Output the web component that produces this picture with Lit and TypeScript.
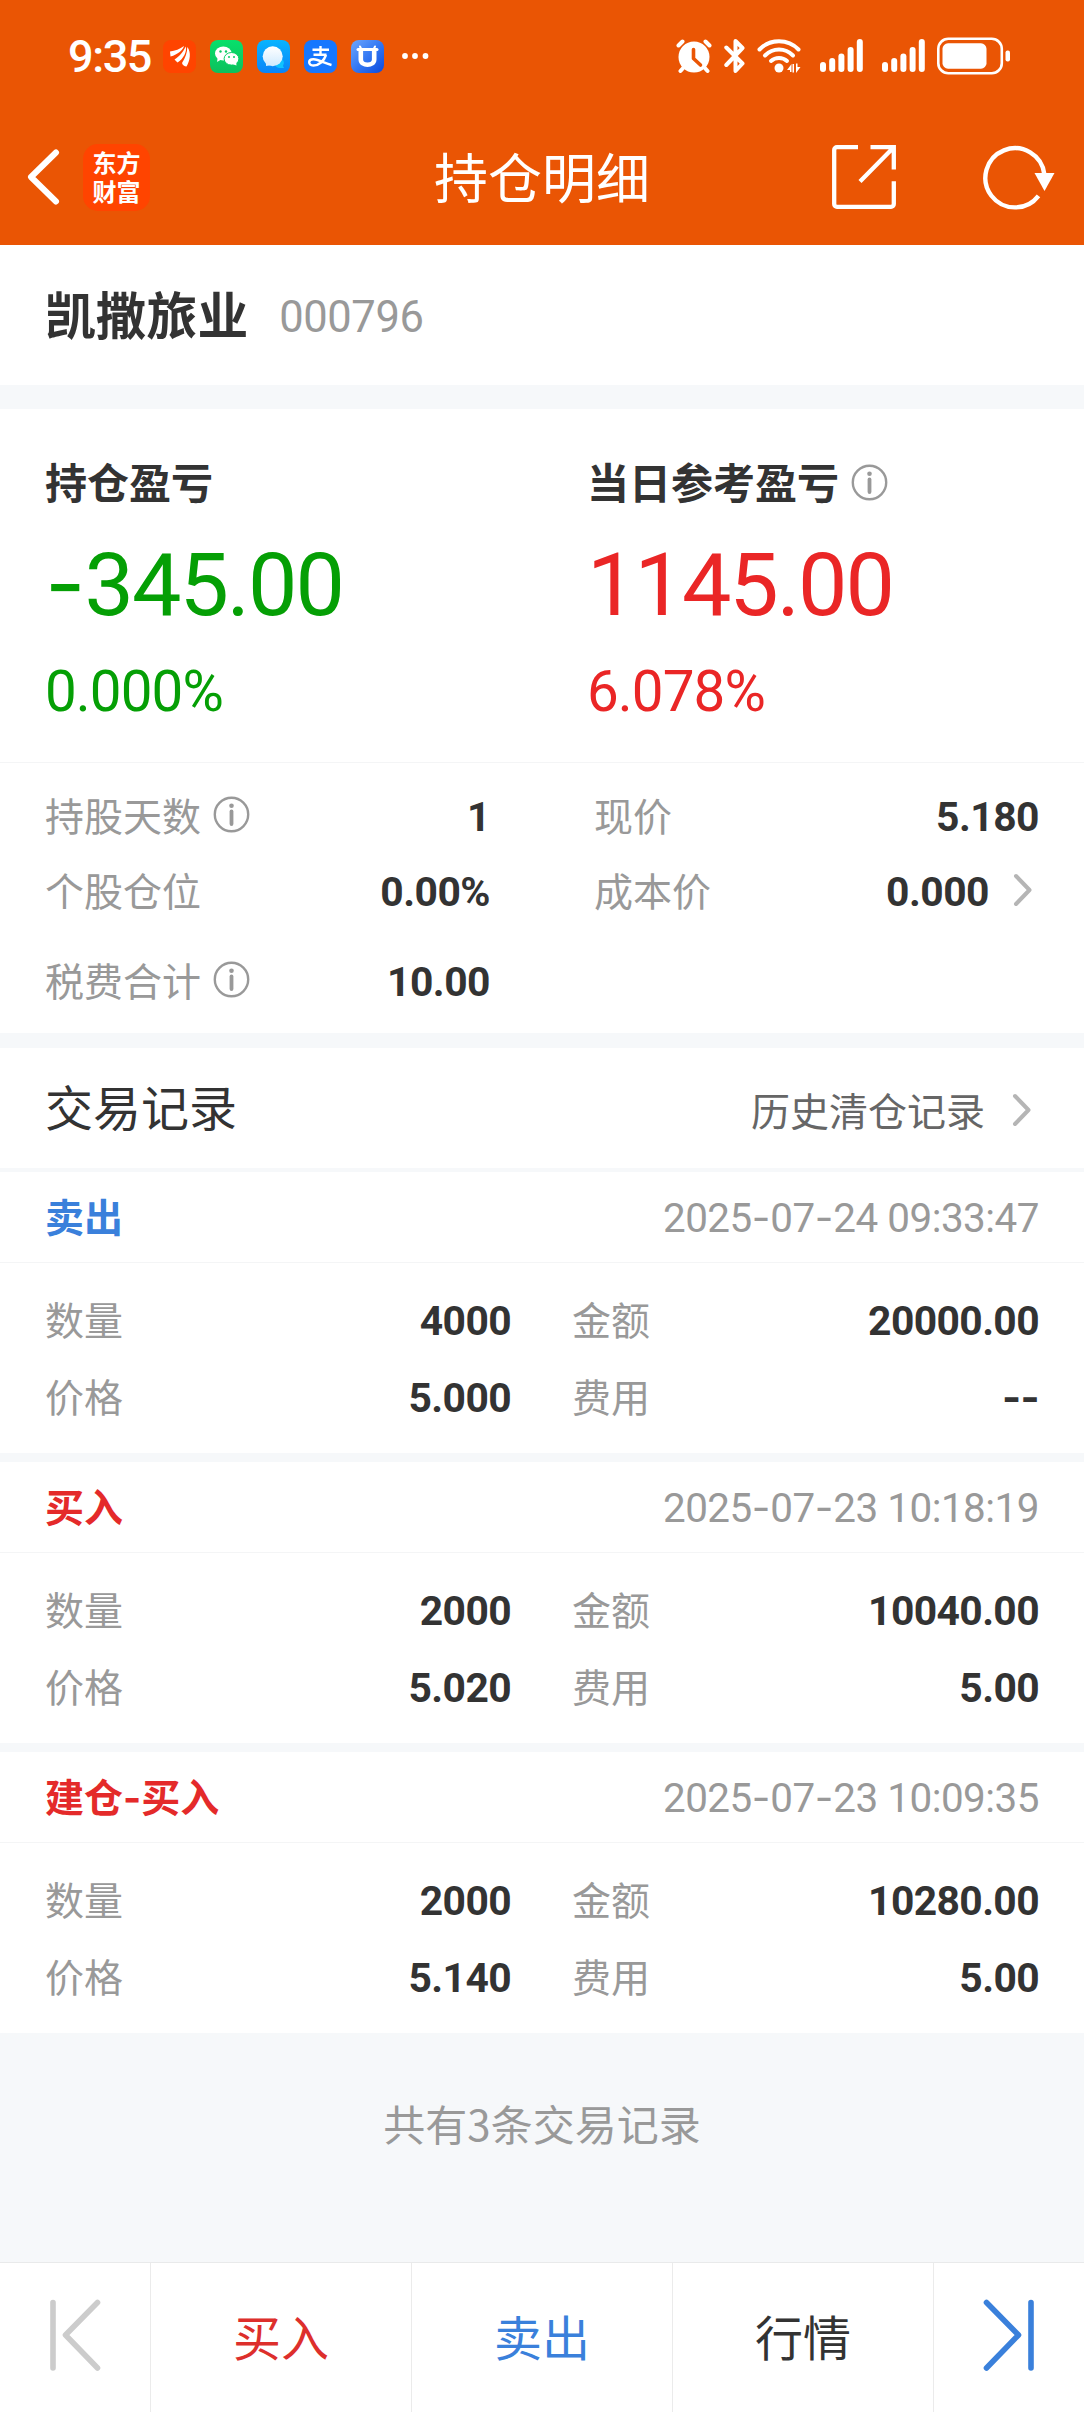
import { LitElement, html, svg, css, nothing } from "lit";
import { customElement, property } from "lit/decorators.js";

const NUM = css`"Roboto", "Noto Sans CJK SC", sans-serif`;
const CJK = css`"Noto Sans CJK SC", "Noto Sans", sans-serif`;

/* Hyphens are set in a wider face than the digits around them. */
const dashed = (text: string) =>
  text.split(/(-)/).map((p) => (p === "-" ? html`<span class="dash">-</span>` : p));

const infoIcon = html`<svg class="info" width="37" height="37" viewBox="0 0 37 37">
  <circle cx="18.5" cy="18.5" r="16.7" fill="none" stroke="#999" stroke-width="2.4" />
  <circle cx="18.5" cy="9.8" r="2.3" fill="#999" />
  <path d="M18.5 15.4V28" stroke="#999" stroke-width="3.8" stroke-linecap="round" />
</svg>`;

const chevron = html`<svg class="chevron" width="20" height="34" viewBox="0 0 20 34">
  <path d="M3 3L16.5 17L3 31" fill="none" stroke="#b5b5b5" stroke-width="4" stroke-linecap="round" stroke-linejoin="round" />
</svg>`;

@customElement("status-bar")
class StatusBar extends LitElement {
  static styles = css`
    :host {
      display: flex;
      align-items: center;
      justify-content: space-between;
      height: 112px;
      padding: 0 73px 0 68px;
      box-sizing: border-box;
      color: #fff;
    }
    .left, .apps, .right { display: flex; align-items: center; }
    .time { font: 500 45px/56px ${NUM}; letter-spacing: -1.4px; width: 95px; padding-top: 2px; }
    .apps { gap: 14px; }
    .dots { margin-left: 17px; }
    svg { display: block; }
    .bt { margin-left: 12px; }
    .wifi { margin-left: 12px; }
    .sig { margin-left: 19px; }
    .bat { margin-left: 12px; }
  `;
  private bars() {
    const tops = [24, 20, 15.5, 9, 1];
    return html`<svg class="sig" width="43" height="36" viewBox="0 0 43 36">
      ${tops.map((t, i) => svg`<rect x=${i * 9.2} y=${t} width="6" height=${34 - t} rx="3" fill="#fff"/>`)}
    </svg>`;
  }
  render() {
    return html`
      <div class="left">
        <div class="time">9:35</div>
        <div class="apps">
          <svg width="33" height="33" viewBox="0 0 33 33">
            <rect width="33" height="33" rx="8" fill="#ff4400" />
            <g fill="#fff">
              <path d="M7 11.500C12 11 17 9 21 6C20 10 15 14.500 7.500 16.500Z" />
              <path d="M11.500 19.500C16.500 16.500 21 11 22.500 6.500C24.500 11 20.500 19 14.500 22.500Z" />
              <path d="M19 23C22.500 18 24.300 12 24.300 7C28.500 12 27 21 23.500 26.500C21.500 26.500 19.500 25 19 23Z" />
            </g>
          </svg>
          <svg width="33" height="33" viewBox="0 0 33 33">
            <defs><linearGradient id="w" x2="0" y2="1"><stop stop-color="#07e06c" /><stop offset="1" stop-color="#0cc05c" /></linearGradient></defs>
            <rect width="33" height="33" rx="8" fill="url(#w)" />
            <path d="M8 16l-1 6 5-3z" fill="#fff" />
            <ellipse cx="13.300" cy="13.500" rx="8.300" ry="7" fill="#fff" />
            <ellipse cx="21.500" cy="18.800" rx="7.400" ry="6.300" fill="#fff" stroke="#08cf64" stroke-width="1" />
            <path d="M22 24l4.500 1.500-.5-4z" fill="#fff" />
            <g fill="#0acb62"><circle cx="10.500" cy="11.500" r="1.200" /><circle cx="16" cy="11.500" r="1.200" /><circle cx="19" cy="17" r="1" /><circle cx="24" cy="17" r="1" /></g>
          </svg>
          <svg width="33" height="33" viewBox="0 0 33 33">
            <defs>
              <linearGradient id="m" x2="0" y2="1"><stop stop-color="#08b4ff" /><stop offset="1" stop-color="#0a84f8" /></linearGradient>
              <linearGradient id="n" x2="0" y2="1"><stop stop-color="#fff" /><stop offset="1" stop-color="#cfeafe" /></linearGradient>
            </defs>
            <rect width="33" height="33" rx="8" fill="url(#m)" />
            <path d="M22 18a5 5 0 0 1 4 8l1 2h-4a5 5 0 0 1-5-4z" fill="#10c3ff" />
            <circle cx="15.700" cy="16.300" r="10" fill="url(#n)" />
            <path d="M9 21l0 5 6-1z" fill="#d6edfe" />
          </svg>
          <svg width="33" height="33" viewBox="0 0 33 33">
            <rect width="33" height="33" rx="8" fill="#1677ff" />
            <g fill="none" stroke="#fff" stroke-width="2.400">
              <path d="M8.500 9.700H25M16.500 6V14.500M9.500 14.800H22.500" />
              <path d="M22 15C20 21 15 25.500 9.500 25.500C3.500 25 4 19 9.500 19.200C15 19.500 21 23.500 27.500 25" />
            </g>
          </svg>
          <svg width="33" height="33" viewBox="0 0 33 33">
            <defs><linearGradient id="u" x2="1" y2="1"><stop stop-color="#6ea6fb" /><stop offset=".5" stop-color="#3378f4" /><stop offset="1" stop-color="#0c49dc" /></linearGradient></defs>
            <rect width="33" height="33" rx="8" fill="url(#u)" />
            <path d="M9.800 10V19.500C9.800 26.500 23.200 26.500 23.200 19.500V10" fill="none" stroke="#fff" stroke-width="4.600" />
            <path d="M7 9.500H26" stroke="#fff" stroke-width="3" stroke-linecap="round" />
            <path d="M9 6.500L10.500 9.500M24 6.500L22.500 9.500" stroke="#fff" stroke-width="2" stroke-linecap="round" />
          </svg>
        </div>
        <svg class="dots" width="28" height="8" viewBox="0 0 28 8" fill="#fff">
          <circle cx="4" cy="4" r="2.900" /><circle cx="14" cy="4" r="2.900" /><circle cx="24.500" cy="4" r="2.900" />
        </svg>
      </div>
      <div class="right">
        <svg width="36" height="36" viewBox="0 0 36 36">
          <g stroke="#fff" stroke-width="4" stroke-linecap="round">
            <path d="M2.500 7.500L6.500 3.500M33.500 7.500L29.500 3.500M8 29L4.500 33M28 29L31.500 33" />
          </g>
          <circle cx="18" cy="19" r="15.500" fill="#fff" />
          <path d="M17.500 11.500V20.500L24.500 27" fill="none" stroke="#ea5504" stroke-width="3.600" stroke-linecap="round" stroke-linejoin="round" />
        </svg>
        <svg class="bt" width="21" height="36" viewBox="0 0 21 36">
          <path d="M2.300 9.500L18.500 25.500L11.500 33V3L18.500 10L2.300 27" fill="none" stroke="#fff" stroke-width="4" stroke-linecap="round" stroke-linejoin="round" />
        </svg>
        <svg class="wifi" width="44" height="36" viewBox="0 0 44 36">
          <g fill="none" stroke="#fff" stroke-width="4" stroke-linecap="round">
            <path d="M2.500 11.500C13 .500 31 .500 41.500 11.500" /><path d="M8 17.500C16 9.500 28 9.500 36 17.500" /><path d="M14 23C18.500 19 25.500 19 30 23" />
          </g>
          <circle cx="22" cy="30" r="4.500" fill="#fff" />
          <path d="M30 32L34.500 26V34H33V32ZM43.500 29L39 35V25.500H40.500V29ZM35.500 26H37V34.500H35.500Z" fill="#fff" />
        </svg>
        ${this.bars()}${this.bars()}
        <svg class="bat" width="74" height="38" viewBox="0 0 74 38">
          <rect x="1.300" y="1.800" width="63.500" height="34.400" rx="10" fill="none" stroke="#fff" stroke-width="2.600" />
          <rect x="5.500" y="6.300" width="44" height="25.400" rx="5.500" fill="#fff" />
          <rect x="68.500" y="13.500" width="4.500" height="11" rx="2" fill="#fff" />
        </svg>
      </div>`;
  }
}

@customElement("title-bar")
class TitleBar extends LitElement {
  static styles = css`
    :host {
      display: grid;
      grid-template-columns: 1fr auto 1fr;
      align-items: center;
      height: 133px;
      color: #fff;
    }
    .back, .actions { display: flex; align-items: center; padding-bottom: 3px; }
    .back { padding-left: 26px; gap: 23px; }
    .logo {
      width: 67px; height: 67px; border-radius: 15px; background: #ff4400;
      font: 700 24px/29px ${CJK}; padding: 3px 9px 0; box-sizing: border-box;
      text-align: center; word-break: break-all;
    }
    .title { font: 400 54px/80px ${CJK}; padding-bottom: 6px; }
    .actions { justify-content: flex-end; padding-right: 29px; gap: 86px; }
    svg { display: block; }
  `;
  render() {
    return html`
      <div class="back">
        <svg width="34" height="56" viewBox="0 0 34 56">
          <path d="M30 3.500L5 28L30 52.500" fill="none" stroke="#fff" stroke-width="6" stroke-linecap="round" stroke-linejoin="round" />
        </svg>
        <div class="logo">东方财富</div>
      </div>
      <div class="title">持仓明细</div>
      <div class="actions">
        <svg width="64" height="64" viewBox="0 0 64 64">
          <path d="M26 2.200H5A2.800 2.800 0 0 0 2.200 5V59A2.800 2.800 0 0 0 5 61.800H59A2.800 2.800 0 0 0 61.800 59V36.200M38.500 2.200H61.800V24.500M61.500 2.500L28 36.500" fill="none" stroke="#fff" stroke-width="4.300" />
        </svg>
        <svg width="73" height="66" viewBox="0 0 73 66">
          <path d="M56.500 51.800A29.600 29.600 0 1 1 62.400 30.500" fill="none" stroke="#fff" stroke-width="4.400" />
          <path d="M52.500 29H72.500L62.500 47Z" fill="#fff" />
        </svg>
      </div>`;
  }
}

interface Trade {
  kind: string;
  tone: "sell" | "buy";
  time: string;
  cells: [string, string][];
}

@customElement("trade-record")
class TradeRecord extends LitElement {
  @property({ attribute: false }) trade!: Trade;
  static styles = css`
    :host { display: block; background: #fff; height: 281px; }
    .head {
      display: flex; align-items: baseline; justify-content: space-between;
      height: 91px; box-sizing: border-box; border-bottom: 1px solid #f4f5f6;
      padding: 13px 45px 0;
    }
    .kind { font: 700 39px/60px ${CJK}; }
    .sell { color: #3a80db; }
    .buy { color: #e42a2a; }
    .time { font: 400 40.4px/60px ${NUM}; letter-spacing: -0.5px; color: #999; }
    .kind .dash { font-family: "Inter", sans-serif; line-height: 1; }
    .time .dash { font-family: "Inter", sans-serif; letter-spacing: 0; line-height: 1; }
    .body {
      display: grid; grid-template-columns: 466px 467px; column-gap: 61px;
      grid-auto-rows: 77px; padding: 17px 45px 0;
    }
    .cell { display: flex; align-items: baseline; justify-content: space-between; }
    .label { font: 400 39px/77px ${CJK}; color: #999; }
    .value { font: 700 40.8px/77px ${NUM}; letter-spacing: -0.6px; color: #333; }
    .value .dash { font-family: "Inter", sans-serif; line-height: 1; }
  `;
  render() {
    const t = this.trade;
    return html`
      <div class="head">
        <span class="kind ${t.tone}">${dashed(t.kind)}</span>
        <span class="time">${dashed(t.time)}</span>
      </div>
      <div class="body">
        ${t.cells.map(([l, v]) => html`<div class="cell"><span class="label">${l}</span><span class="value">${dashed(v)}</span></div>`)}
      </div>`;
  }
}

@customElement("bottom-nav")
class BottomNav extends LitElement {
  static styles = css`
    :host {
      display: grid; grid-template-columns: 151px 261px 261px 261px 150px;
      height: 150px; box-sizing: border-box; border-top: 1px solid #e9eaeb; background: #fff;
      font: 400 48px/70px ${CJK};
    }
    .item { display: flex; align-items: center; justify-content: center; border-right: 1px solid #ebebeb; padding-bottom: 6px; }
    .item:last-child { border-right: 0; }
    .buy { color: #dd2f2c; }
    .sell { color: #3a80db; }
    .quote { color: #333; }
  `;
  render() {
    return html`
      <div class="item prev">
        <svg width="52" height="72" viewBox="0 0 52 72" fill="none" stroke="#ccc" stroke-width="5.600" stroke-linecap="round" stroke-linejoin="round">
          <path d="M4 3.500V69M48.500 3.500L16.500 36L48.500 69" />
        </svg>
      </div>
      <div class="item buy">买入</div>
      <div class="item sell">卖出</div>
      <div class="item quote">行情</div>
      <div class="item next">
        <svg width="52" height="72" viewBox="0 0 52 72" fill="none" stroke="#3a80db" stroke-width="5.600" stroke-linecap="round" stroke-linejoin="round">
          <path d="M48 3.500V69M3.500 3.500L35.500 36L3.500 69" />
        </svg>
      </div>`;
  }
}

@customElement("app-root")
class AppRoot extends LitElement {
  static styles = css`
    :host {
      display: flex; flex-direction: column; width: 1084px; height: 2412px;
      background: #f6f8fa; color: #333; font-family: ${CJK}; overflow: hidden;
    }
    svg { display: block; }
    .top { background: #ea5504; height: 245px; }
    .stock {
      display: flex; align-items: center; height: 140px; box-sizing: border-box;
      padding: 0 45px; background: #fff; gap: 31px; margin-bottom: 24px;
    }
    .name { font: 700 50.8px/80px ${CJK}; padding-bottom: 5px; }
    .code { font: 400 43.5px/60px ${NUM}; letter-spacing: -0.4px; color: #999; padding-top: 5px; }
    .pnl {
      display: grid; grid-template-columns: 542px 1fr; height: 354px; box-sizing: border-box;
      padding: 42px 45px 0; background: #fff; border-bottom: 1px solid #f4f5f6;
    }
    .cap { display: flex; align-items: center; font: 700 42px/60px ${CJK}; gap: 12px; }
    .cap .info { margin-top: 3px; }
    .big { font: 400 88px/100px ${NUM}; letter-spacing: -2px; margin-top: 24px; }
    .big .dash { font-family: "Inter", sans-serif; letter-spacing: -1px; line-height: 1; }
    .pct { font: 400 56.5px/60px ${NUM}; letter-spacing: -0.9px; margin-top: 27px; }
    .down { color: #059f05; }
    .up { color: #ea2626; }
    .facts {
      display: grid; grid-template-columns: 445px 445px; column-gap: 104px;
      grid-template-rows: 75px 75px 105px; height: 270px; box-sizing: border-box;
      padding: 14px 45px 0 45px; background: #fff; margin-bottom: 15px;
    }
    .fact { display: flex; align-items: baseline; }
    .fact .label { font: 400 39px/75px ${CJK}; color: #999; margin-right: 12px; }
    .fact .value { font: 700 40.8px/75px ${NUM}; letter-spacing: -0.5px; margin-left: auto; }
    .fact .info, .fact .chevron { align-self: center; }
    .fact .chevron { margin: 0 6px 0 24px; }
    .tall .label, .tall .value { line-height: 105px; }
    .section {
      display: flex; align-items: baseline; justify-content: space-between; height: 120px;
      padding: 0 52px 0 45px; background: #fff; margin-bottom: 4px; box-sizing: border-box;
    }
    .heading { font: 400 48px/114px ${CJK}; }
    .more { display: flex; align-items: center; gap: 27px; font: 400 39px/114px ${CJK}; color: #666; }
    .more .chevron { margin-top: 2px; }
    .records { display: flex; flex-direction: column; gap: 9px; }
    .total { flex: 1; display: flex; align-items: flex-start; justify-content: center; font: 400 42px/60px ${CJK}; color: #999; padding-top: 60px; }
  `;

  private trades: Trade[] = [
    { kind: "卖出", tone: "sell", time: "2025-07-24 09:33:47", cells: [["数量", "4000"], ["金额", "20000.00"], ["价格", "5.000"], ["费用", "--"]] },
    { kind: "买入", tone: "buy", time: "2025-07-23 10:18:19", cells: [["数量", "2000"], ["金额", "10040.00"], ["价格", "5.020"], ["费用", "5.00"]] },
    { kind: "建仓-买入", tone: "buy", time: "2025-07-23 10:09:35", cells: [["数量", "2000"], ["金额", "10280.00"], ["价格", "5.140"], ["费用", "5.00"]] },
  ];

  private fact(label: string, value: string, opts: { info?: boolean; link?: boolean; tall?: boolean } = {}) {
    return html`<div class="fact ${opts.tall ? "tall" : ""}">
      <span class="label">${label}</span>${opts.info ? infoIcon : nothing}
      <span class="value">${value}</span>${opts.link ? chevron : nothing}
    </div>`;
  }

  render() {
    return html`
      <div class="top"><status-bar></status-bar><title-bar></title-bar></div>
      <div class="stock"><span class="name">凯撒旅业</span><span class="code">000796</span></div>
      <div class="pnl">
        <div class="col">
          <div class="cap">持仓盈亏</div>
          <div class="big down">${dashed("-345.00")}</div>
          <div class="pct down">0.000%</div>
        </div>
        <div class="col">
          <div class="cap">当日参考盈亏${infoIcon}</div>
          <div class="big up">1145.00</div>
          <div class="pct up">6.078%</div>
        </div>
      </div>
      <div class="facts">
        ${this.fact("持股天数", "1", { info: true })}
        ${this.fact("现价", "5.180")}
        ${this.fact("个股仓位", "0.00%")}
        ${this.fact("成本价", "0.000", { link: true })}
        ${this.fact("税费合计", "10.00", { info: true, tall: true })}
      </div>
      <div class="section">
        <span class="heading">交易记录</span>
        <span class="more">历史清仓记录${chevron}</span>
      </div>
      <div class="records">${this.trades.map((t) => html`<trade-record .trade=${t}></trade-record>`)}</div>
      <div class="total">共有3条交易记录</div>
      <bottom-nav></bottom-nav>`;
  }
}
